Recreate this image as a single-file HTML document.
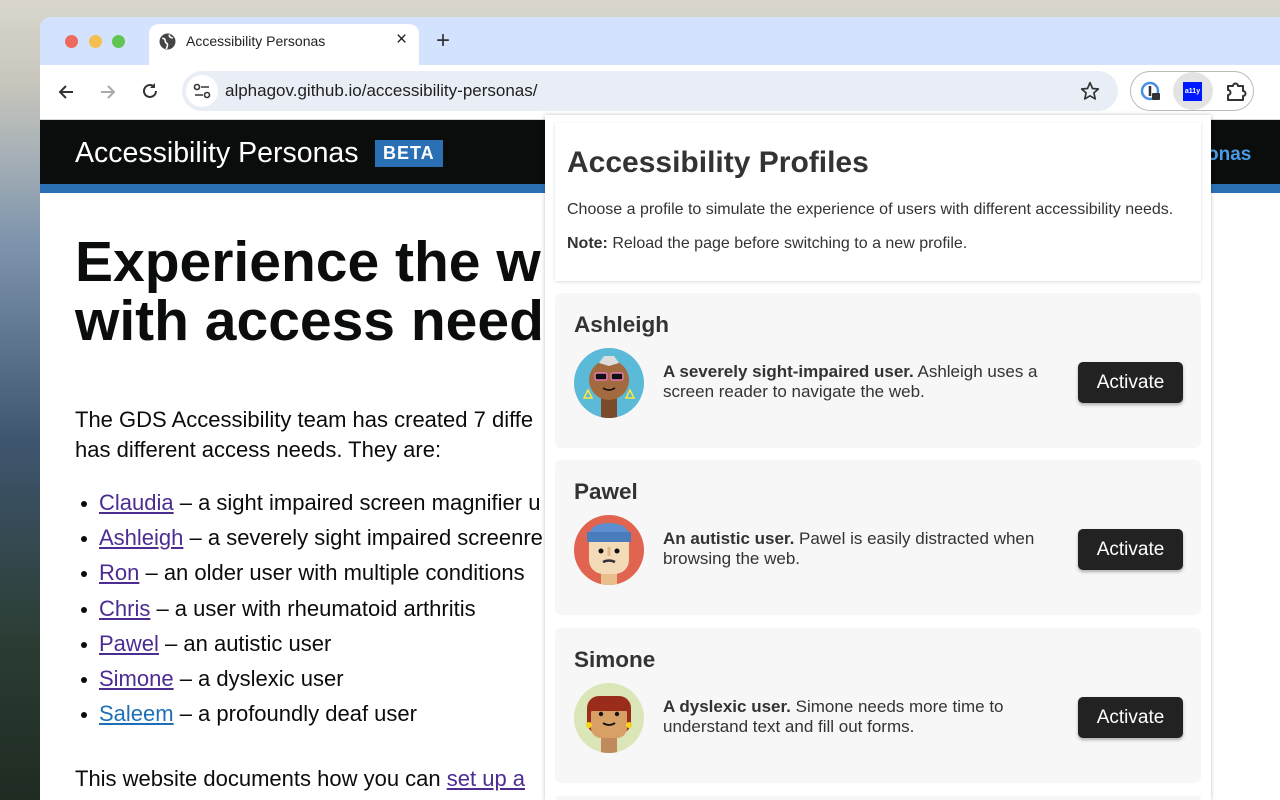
<!DOCTYPE html>
<html><head><meta charset="utf-8"><style>
*{margin:0;padding:0;box-sizing:border-box}
html{width:1280px;height:800px;overflow:hidden}
body{width:1280px;height:800px;overflow:hidden;font-family:"Liberation Sans",Arial,sans-serif;background:linear-gradient(180deg,#d9d6cc 0%,#c9c7bd 10%,#7f95ad 30%,#3f5670 55%,#2b3d33 80%,#1f2b22 100%);position:relative}
.win{position:absolute;left:40px;top:17px;width:1240px;height:783px;border-radius:11px 0 0 0;overflow:hidden;background:#fff}
.tabbar{height:48px;background:#d3e3fd;position:relative}
.dot{position:absolute;top:18px;width:13px;height:13px;border-radius:50%}
.tab{position:absolute;left:109px;top:7px;width:270px;height:42px;background:#fff;border-radius:10px 10px 0 0;font-size:14px;color:#1f1f1f}
.toolbar{height:55px;background:#fff;position:relative;border-bottom:1px solid #d8d8d8}
.omni{position:absolute;left:142px;top:6px;width:936px;height:40px;border-radius:20px;background:#e9eef6;font-size:17px;color:#1f1f1f}
.page{position:absolute;top:103px;left:0;right:0;bottom:0}
.hdr{height:64px;background:#0b0c0c;color:#fff;position:relative}
.blue{height:9px;background:#2b6fb5}
h1{position:absolute;left:75px;top:233px;font-size:57px;line-height:59px;font-weight:bold;color:#0b0c0c;white-space:nowrap}
.body{position:absolute;left:75px;font-size:22px;color:#0b0c0c;line-height:30px;white-space:nowrap}
a{color:#4c2c92;text-decoration:underline}
ul{list-style:none}
li{position:relative;padding-left:24px;height:35.2px;line-height:30px}
li:before{content:"";position:absolute;left:6px;top:13px;width:6px;height:6px;border-radius:50%;background:#0b0c0c}
.pop{position:absolute;left:545px;top:115px;width:666px;height:685px;background:#fff;box-shadow:0 0 4px rgba(0,0,0,.25);overflow:hidden}
.intro{position:absolute;left:10px;top:8px;width:646px;height:158px;background:#fff;box-shadow:0 1px 3px rgba(0,0,0,.15)}
.card{position:absolute;left:10px;width:646px;height:155px;background:#f7f7f7;border-radius:6px}
.card h2{position:absolute;left:19px;top:19px;font-size:22.5px;font-weight:bold;color:#333}
.card .av{position:absolute;left:18px;top:54px;width:72px;height:72px}
.card p{position:absolute;left:108px;top:69px;width:400px;font-size:17px;line-height:20px;color:#333}
.btn{position:absolute;left:523px;top:69px;width:105px;height:41px;background:#222;color:#fff;border-radius:5px;font-size:19px;text-align:center;line-height:41px;box-shadow:0 2px 3px rgba(0,0,0,.3)}
</style></head><body>
<div class="win">
 <div class="tabbar">
  <div class="dot" style="left:25px;background:#ed6a5e"></div>
  <div class="dot" style="left:49px;background:#f5bf4f"></div>
  <div class="dot" style="left:72px;background:#61c554"></div>
  <div class="tab">
   <svg style="position:absolute;left:10px;top:9px" width="17" height="17" viewBox="0 0 16 16"><circle cx="8" cy="8" r="7.5" fill="#444"/><path d="M3 5c2 0 3 1 3 3s2 1 2 3-1 3-1 4M10 1.5c-1 2 1 3 3 3" stroke="#fff" stroke-width="1.5" fill="none"/></svg>
   <span style="position:absolute;left:37px;top:9px">Accessibility Personas</span>
   <span style="position:absolute;left:247px;top:5px;font-size:19px">×</span>
  </div>
  <span style="position:absolute;left:396px;top:10px;font-size:24px;color:#333">+</span>
 </div>
 <div class="toolbar">
  <svg style="position:absolute;left:17px;top:18px" width="18" height="18" viewBox="0 0 18 18"><path d="M16 9H3M9 3L3 9l6 6" stroke="#333" stroke-width="2" fill="none"/></svg>
  <svg style="position:absolute;left:59px;top:18px" width="18" height="18" viewBox="0 0 18 18"><path d="M2 9h13M9 3l6 6-6 6" stroke="#aaa" stroke-width="2" fill="none"/></svg>
  <svg style="position:absolute;left:101px;top:17px" width="18" height="18" viewBox="0 0 18 18"><path d="M15 9a6 6 0 1 1-2-4.5" stroke="#333" stroke-width="2" fill="none"/><path d="M14 1v5h-5z" fill="#333"/></svg>
  <div class="omni">
   <div style="position:absolute;left:4px;top:4px;width:32px;height:32px;border-radius:50%;background:#fff"></div>
   <svg style="position:absolute;left:11px;top:12px" width="18" height="16" viewBox="0 0 18 16"><circle cx="4" cy="4" r="2.5" stroke="#333" stroke-width="1.6" fill="none"/><path d="M8 4h8M2 12h8" stroke="#333" stroke-width="1.6"/><circle cx="14" cy="12" r="2.5" stroke="#333" stroke-width="1.6" fill="none"/></svg>
   <span style="position:absolute;left:43px;top:10px">alphagov.github.io/accessibility-personas/</span>
   <svg style="position:absolute;left:898px;top:10px" width="20" height="20" viewBox="0 0 24 24"><path d="M12 2l3 7 7 .6-5.3 4.7 1.6 7.2L12 17.8 5.7 21.5l1.6-7.2L2 9.6 9 9z" stroke="#333" stroke-width="2" fill="none" stroke-linejoin="round"/></svg>
  </div>
  <div style="position:absolute;left:1090px;top:6px;width:124px;height:40px;border:1px solid #bbb;border-radius:20px"></div>
  <svg style="position:absolute;left:1100px;top:16px" width="22" height="22" viewBox="0 0 22 22"><circle cx="10" cy="10" r="8" stroke="#4a90e2" stroke-width="2.5" fill="none"/><path d="M10 5v10" stroke="#333" stroke-width="2.5"/><rect x="12" y="12" width="8" height="7" rx="1" fill="#333"/></svg>
  <div style="position:absolute;left:1133px;top:7px;width:40px;height:38px;border-radius:50%;background:#e3e3e3"></div>
  <div style="position:absolute;left:1143px;top:17px;width:19px;height:19px;background:#0018ff;color:#fff;font-size:7px;font-weight:bold;text-align:center;line-height:19px">a11y</div>
  <svg style="position:absolute;left:1185px;top:15px" width="22" height="22" viewBox="0 0 22 22"><path d="M3 6h5a2.5 2.5 0 0 1 5 0h5v5a2.5 2.5 0 0 1 0 5v4H3v-5a2.5 2.5 0 0 0 0-5z" stroke="#333" stroke-width="2" fill="none" stroke-linejoin="round"/></svg>
 </div>
 <div class="page">
  <div class="hdr">
   <span style="position:absolute;left:35px;top:17px;font-size:28.5px">Accessibility Personas</span>
   <span style="position:absolute;left:335px;top:20px;background:#2b6fb5;color:#fff;font-weight:bold;font-size:18px;padding:3px 8px;letter-spacing:1px">BETA</span>
   <span style="position:absolute;left:1167px;top:24px;font-size:19px;color:#4a9be8;font-weight:bold">onas</span>
  </div>
  <div class="blue"></div>
 </div>
</div>
<h1>Experience the w<br>with access need</h1>
<div class="body" style="top:405px">The GDS Accessibility team has created 7 diffe<br>has different access needs. They are:</div>
<ul class="body" style="top:488px;left:75px">
 <li><a>Claudia</a> – a sight impaired screen magnifier u</li>
 <li><a>Ashleigh</a> – a severely sight impaired screenre</li>
 <li><a>Ron</a> – an older user with multiple conditions</li>
 <li><a>Chris</a> – a user with rheumatoid arthritis</li>
 <li><a>Pawel</a> – an autistic user</li>
 <li><a>Simone</a> – a dyslexic user</li>
 <li><a style="color:#1d70b8">Saleem</a> – a profoundly deaf user</li>
</ul>
<div class="body" style="top:764px;height:30px;overflow:hidden">This website documents how you can <a>set up a</a></div>
<div class="pop">
 <div class="intro">
  <div style="position:absolute;left:12px;top:23px;font-size:30px;font-weight:bold;color:#333">Accessibility Profiles</div>
  <div style="position:absolute;left:12px;top:78px;font-size:16px;color:#333;white-space:nowrap">Choose a profile to simulate the experience of users with different accessibility needs.</div>
  <div style="position:absolute;left:12px;top:112px;font-size:16px;color:#333;white-space:nowrap"><b>Note:</b> Reload the page before switching to a new profile.</div>
 </div>
 <div class="card" style="top:178px"><h2>Ashleigh</h2>
  <svg class="av" viewBox="0 0 72 72"><clipPath id="c1"><circle cx="36" cy="36" r="35"/></clipPath><g clip-path="url(#c1)"><rect width="72" height="72" fill="#5bbad8"/><rect x="28" y="50" width="16" height="24" fill="#7a4a2a"/><circle cx="36" cy="33" r="20" fill="#a26a3e"/><path d="M26 16l5-7h10l5 7-10 3z" fill="#ddd"/><rect x="22" y="26" width="12" height="7" rx="2" fill="#111" stroke="#e77ab8" stroke-width="1.5"/><rect x="38" y="26" width="12" height="7" rx="2" fill="#111" stroke="#e77ab8" stroke-width="1.5"/><path d="M30 41q6 4 12 0" stroke="#111" stroke-width="1.6" fill="none"/><path d="M11 51l4-8 4 8z M53 51l4-8 4 8z" stroke="#ffe63b" stroke-width="1.5" fill="none"/></g></svg>
  <p><b>A severely sight-impaired user.</b> Ashleigh uses a screen reader to navigate the web.</p><div class="btn">Activate</div></div>
 <div class="card" style="top:345px"><h2>Pawel</h2>
  <svg class="av" viewBox="0 0 72 72"><clipPath id="c2"><circle cx="36" cy="36" r="35"/></clipPath><g clip-path="url(#c2)"><rect width="72" height="72" fill="#e06450"/><rect x="28" y="50" width="16" height="24" fill="#e8bf8c"/><rect x="16" y="14" width="40" height="46" rx="14" fill="#f4dbb8"/><path d="M15 26q0-17 21-17t21 17z" fill="#5c8fcf"/><rect x="14" y="18" width="44" height="10" fill="#4a7cbd"/><circle cx="28" cy="37" r="2.5" fill="#111"/><circle cx="44" cy="37" r="2.5" fill="#111"/><path d="M36 33v9" stroke="#e0b48a" stroke-width="3"/><path d="M30 48q6-3 12 0" stroke="#333" stroke-width="2.5" fill="none"/></g></svg>
  <p><b>An autistic user.</b> Pawel is easily distracted when browsing the web.</p><div class="btn">Activate</div></div>
 <div class="card" style="top:513px"><h2>Simone</h2>
  <svg class="av" viewBox="0 0 72 72"><clipPath id="c3"><circle cx="36" cy="36" r="35"/></clipPath><g clip-path="url(#c3)"><rect width="72" height="72" fill="#dbe6b8"/><rect x="28" y="50" width="16" height="24" fill="#c08a5c"/><rect x="14" y="14" width="44" height="38" rx="12" fill="#9a2c1c"/><rect x="18" y="22" width="36" height="34" rx="10" fill="#d9a066"/><path d="M18 17h36v12H18z" fill="#9a2c1c"/><circle cx="28" cy="32" r="2.2" fill="#111"/><circle cx="44" cy="32" r="2.2" fill="#111"/><path d="M30 41q6 4 12 0" stroke="#111" stroke-width="1.8" fill="none"/><circle cx="16" cy="43" r="3" fill="#f7d31a"/><circle cx="56" cy="43" r="3" fill="#f7d31a"/></g></svg>
  <p><b>A dyslexic user.</b> Simone needs more time to understand text and fill out forms.</p><div class="btn">Activate</div></div>
 <div class="card" style="top:681px;height:4px"></div>
</div>
</body></html>
